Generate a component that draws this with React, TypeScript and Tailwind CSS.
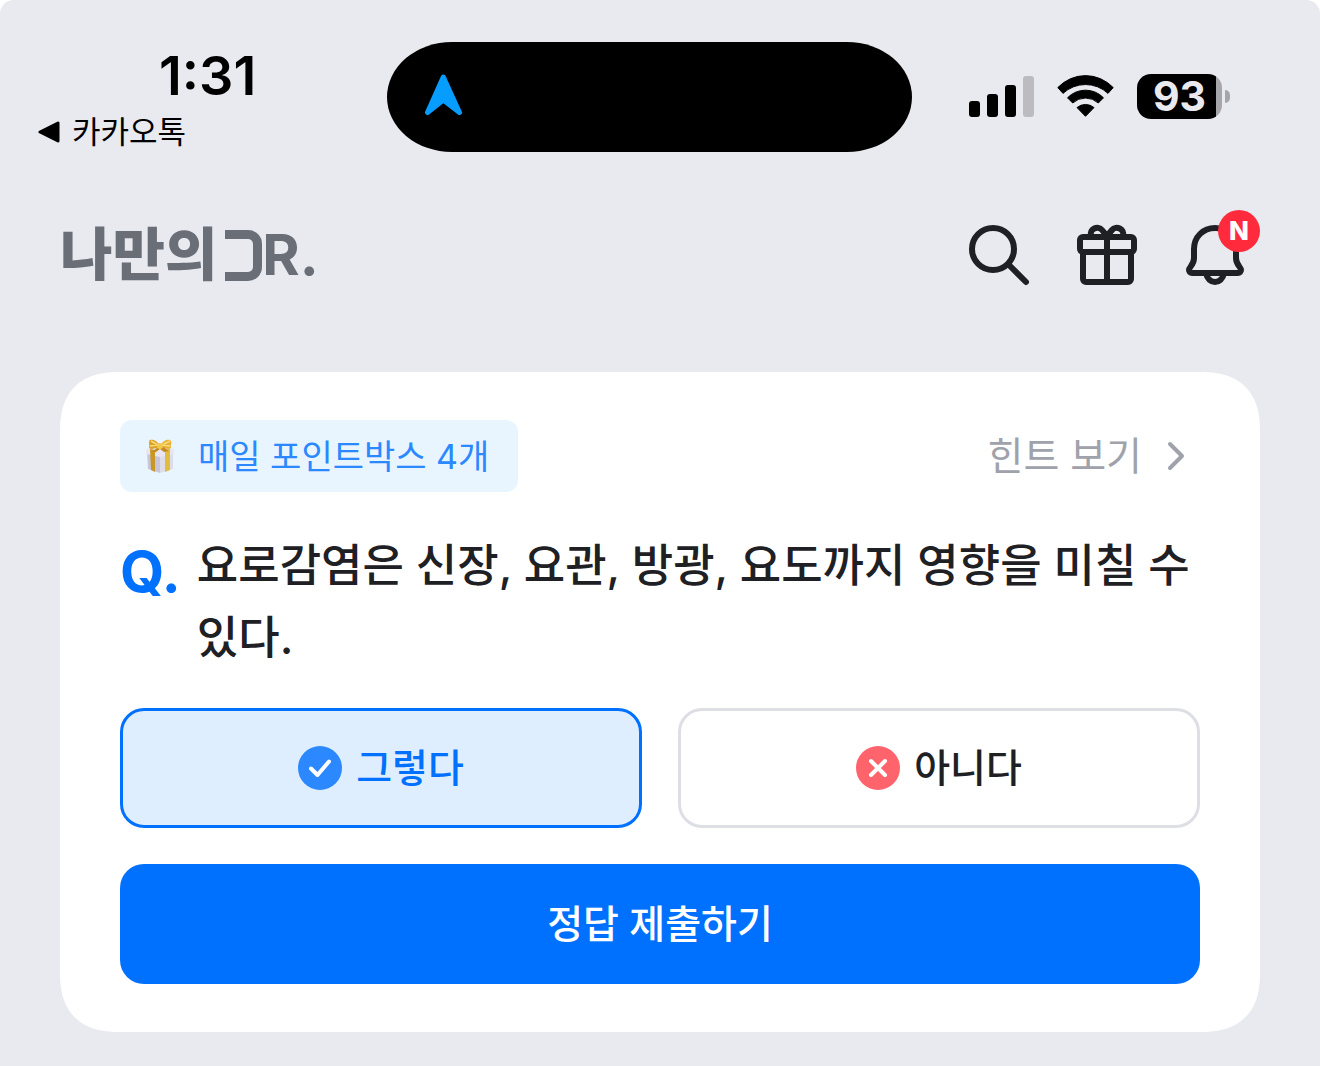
import React, { useState } from 'react';

interface AnswerOptionProps {
  value: string;
  label: string;
  checked: boolean;
  onSelect: (value: string) => void;
  icon: React.ReactNode;
}

const SignalIcon = () => (
  <svg width="65" height="42" viewBox="0 0 65 42" aria-hidden="true">
    <rect x="0" y="26" width="11" height="16" rx="3" />
    <rect x="18" y="19" width="11" height="23" rx="3" />
    <rect x="36" y="10" width="11" height="32" rx="3" />
    <rect x="54" y="1" width="11" height="41" rx="3" fill="#bbbbc0" />
  </svg>
);

const WifiIcon = () => (
  <svg width="57" height="42" viewBox="0 0 57 42" aria-hidden="true">
    <g stroke="#000" strokeWidth="1" strokeLinejoin="round">
      <path d="M.8 12.6A38 38 0 0 1 56.2 12.6L51 18.4A33 33 0 0 0 6 18.4Z" />
      <path d="M10.5 22.8A25 25 0 0 1 46.5 22.8L41.3 28A19 19 0 0 0 15.7 28Z" />
      <path d="M20 32.6A13 13 0 0 1 37 32.6L28.5 41.3Z" />
    </g>
  </svg>
);

const LocationIcon = () => (
  <svg width="39" height="42" viewBox="0 0 39 42" aria-hidden="true">
    <path
      d="M19.3 3L35.5 38.5L19.3 26L3.5 38.5Z"
      fill="#069dff"
      stroke="#069dff"
      strokeWidth="5"
      strokeLinejoin="round"
    />
  </svg>
);

const SearchIcon = () => (
  <svg width="72" height="72" viewBox="0 0 72 72" fill="none" stroke="#1f2024" strokeWidth="6" strokeLinecap="round">
    <circle cx="30" cy="30" r="21" />
    <path d="M46 46L63 63" />
  </svg>
);

const GiftIcon = () => (
  <svg width="72" height="72" viewBox="0 0 72 72" fill="none" stroke="#1f2024" strokeWidth="6" strokeLinejoin="round">
    <rect x="9" y="18" width="54" height="15" rx="3" />
    <path d="M12 33V60a3 3 0 0 0 3 3H57a3 3 0 0 0 3-3V33M36 18V63" />
    <path d="M20 17C18 10 27 6 31 11L36 17L41 11C45 6 54 10 52 17" />
  </svg>
);

const BellIcon = () => (
  <svg width="72" height="72" viewBox="0 0 72 72" fill="none" stroke="#1f2024" strokeWidth="6" strokeLinejoin="round">
    <path d="M36 9C24 9 15 18 15 30V39C15 46 10 48 10 51A3 3 0 0 0 13 54H59A3 3 0 0 0 62 51C62 48 57 46 57 39V30C57 18 48 9 36 9Z" />
    <path d="M27 54C28 60 32 63 36 63S44 60 45 54" />
  </svg>
);

const PointBoxIcon = () => (
  <svg width="28" height="36" viewBox="0 0 28 36" aria-hidden="true">
    <path d="M1 12L14 15V35L2 31Z" fill="#c6c5dc" />
    <path d="M14 15L27 12V31L14 35Z" fill="#dddce9" />
    <path d="M0 11L14 8L28 11V16L14 19L0 16Z" fill="#e6e5f1" />
    <path d="M4 11L9 12V34L5 32Z" fill="#c99724" />
    <path d="M19 12L24 11V32L19 34Z" fill="#e0bc40" />
    <path d="M13 9C8 11 3 12 3 9C4 8 2 4 4 2C8 1 12 4 14 8Z" fill="#dc9f26" />
    <path d="M15 9C20 11 25 12 25 9C24 7 27 4 24 2C20 1 16 4 14 8Z" fill="#e8b136" />
    <path d="M5 3L12 7L4 8M24 3L16 7L24 8" fill="none" stroke="#f9dc78" strokeWidth="1.5" />
    <path d="M12 9L6 14L10 14L14 11L18 14L23 13L16 8Z" fill="#c98a1c" />
    <circle cx="14" cy="8" r="3" fill="#f2c94f" />
  </svg>
);

const CheckBadge = () => (
  <svg width="44" height="44" viewBox="0 0 44 44" aria-hidden="true">
    <circle cx="22" cy="22" r="22" fill="#2b88ff" />
    <path d="M13 22.5L19.5 29L31 15.5" fill="none" stroke="#fff" strokeWidth="4" strokeLinecap="round" strokeLinejoin="round" />
  </svg>
);

const CrossBadge = () => (
  <svg width="44" height="44" viewBox="0 0 44 44" aria-hidden="true">
    <circle cx="22" cy="22" r="22" fill="#ff636b" />
    <path d="M15 15L29 29M29 15L15 29" fill="none" stroke="#fff" strokeWidth="4" strokeLinecap="round" />
  </svg>
);

const StatusBar = () => (
  <div className="grid grid-cols-[387fr_525fr_408fr] pt-[42px] text-black">
    <div className="pl-[38px]">
      <div className="pl-[121px] font-['Inter'] text-[54px] font-semibold leading-[68px]">1:31</div>
      <button type="button" className="flex items-center gap-3 text-[31px] leading-[44px]">
        <svg width="22" height="22" viewBox="0 0 22 22" aria-hidden="true">
          <path d="M2 11L20 2V20Z" stroke="#000" strokeWidth="3" strokeLinejoin="round" />
        </svg>
        카카오톡
      </button>
    </div>
    <div className="flex h-[110px] items-center rounded-[65px/55px] bg-black pb-1 pl-[37px]">
      <LocationIcon />
    </div>
    <div className="flex h-[108px] items-center justify-end gap-[23px] pr-[90px]">
      <SignalIcon />
      <WifiIcon />
      <div className="flex items-center gap-[3px]">
        <div className="flex h-[45px] w-[85px] items-center justify-center rounded-[14px] bg-linear-to-r from-black from-93% to-[#a6a6aa] to-93% font-['Inter'] text-[41px] font-bold leading-none text-[#e9eaf0]">
          93
        </div>
        <div className="h-[13px] w-[5px] rounded-r-full bg-[#a6a6aa]" />
      </div>
    </div>
  </div>
);

const Header = () => (
  <header className="mt-[65px] flex items-center justify-between pl-[60px] pr-[69px]">
    <a href="#home" aria-label="나만의DR." className="flex items-center text-[57px] font-black leading-[66px] text-[#696e77]">
      <span>나만의</span>
      <span className="ml-2 h-[51px] w-[37px] rounded-r-[14px] border-y-9 border-r-9 border-[#696e77]" />
      <span className="font-['Inter'] font-bold">R.</span>
    </a>
    <nav className="flex gap-9">
      <button type="button" aria-label="검색">
        <SearchIcon />
      </button>
      <button type="button" aria-label="선물">
        <GiftIcon />
      </button>
      <button type="button" aria-label="알림" className="relative">
        <BellIcon />
        <span className="absolute -right-[9px] -top-[9px] flex size-[42px] items-center justify-center rounded-full bg-[#ff2b3d] pb-0.5 font-['Inter'] text-[26px] font-extrabold text-white">
          N
        </span>
      </button>
    </nav>
  </header>
);

const AnswerOption: React.FC<AnswerOptionProps> = ({ value, label, checked, onSelect, icon }) => (
  <label
    className={
      checked
        ? 'flex h-[120px] cursor-pointer items-center justify-center gap-[14px] rounded-3xl border-3 border-[#0070ff] bg-[#dfeeff] text-[#0070ff]'
        : 'flex h-[120px] cursor-pointer items-center justify-center gap-[14px] rounded-3xl border-3 border-[#dedfe4] bg-white text-[#1f2024]'
    }
  >
    <input
      type="radio"
      name="answer"
      value={value}
      checked={checked}
      onChange={() => onSelect(value)}
      className="sr-only"
    />
    {icon}
    <span className="text-[39px] font-medium leading-[60px]">{label}</span>
  </label>
);

const QuizCard = () => {
  const [answer, setAnswer] = useState('yes');

  return (
    <form
      onSubmit={(e) => e.preventDefault()}
      className="mx-[60px] mt-[81px] rounded-[60px] bg-white px-[60px] py-12 [corner-shape:superellipse(1.3)]"
    >
      <div className="flex items-center justify-between">
        <div className="flex h-[72px] items-center gap-6 rounded-xl bg-[#e8f5ff] pl-[26px] pr-[29px] text-[34px] leading-[48px] text-[#2b88ff]">
          <PointBoxIcon />
          <span className="pt-0.5">매일 포인트박스 4개</span>
        </div>
        <button type="button" className="flex items-center gap-6 pr-[14px] text-[39px] leading-[60px] text-[#9fa2ab]">
          힌트 보기
          <svg width="20" height="30" viewBox="0 0 20 30" fill="none" aria-hidden="true">
            <path d="M4 3L16 15L4 27" stroke="#9fa2ab" strokeWidth="4" strokeLinecap="round" strokeLinejoin="round" />
          </svg>
        </button>
      </div>

      <div className="mt-9 flex gap-4 text-[#1f2024]">
        <span className="pt-2 font-['Inter'] text-[57px] font-bold leading-[72px] text-[#0070ff]">Q.</span>
        <p className="flex-1 pt-0.5 text-[45px] font-medium leading-[72px]">
          요로감염은 신장, 요관, 방광, 요도까지 영향을 미칠 수 있다.
        </p>
      </div>

      <div className="mt-[34px] grid grid-cols-2 gap-9">
        <AnswerOption value="yes" label="그렇다" checked={answer === 'yes'} onSelect={setAnswer} icon={<CheckBadge />} />
        <AnswerOption value="no" label="아니다" checked={answer === 'no'} onSelect={setAnswer} icon={<CrossBadge />} />
      </div>

      <button
        type="submit"
        className="mt-9 h-[120px] w-full rounded-3xl bg-[#0070ff] text-[39px] font-medium leading-[60px] text-white"
      >
        정답 제출하기
      </button>
    </form>
  );
};

export default function App() {
  return (
    <div className="bg-white">
      <main className="min-h-screen rounded-t-[14px] bg-[#e9eaf0] pb-8 font-['Inter','Noto_Sans_CJK_KR',sans-serif]">
        <StatusBar />
        <Header />
        <QuizCard />
      </main>
    </div>
  );
}
